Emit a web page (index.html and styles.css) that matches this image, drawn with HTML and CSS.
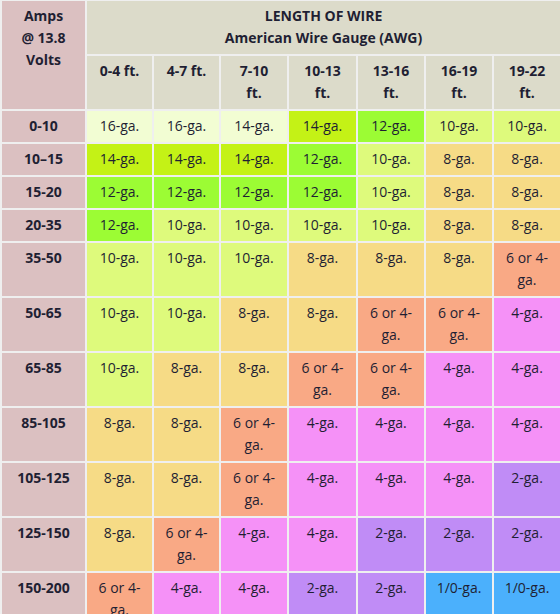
FILE: index.html
```html
<!DOCTYPE html>
<html>
<head>
<meta charset="utf-8">
<link rel="stylesheet" href="styles.css">
</head>
<body>
<table class="wire">
  <colgroup>
    <col class="c-amps"><col class="c67"><col class="c67"><col class="c68"><col class="c69"><col class="c68"><col class="c68"><col class="c68">
  </colgroup>
  <thead>
    <tr>
      <th class="amps" rowspan="2">Amps<br>@ 13.8<br>Volts</th>
      <th class="head" colspan="7">LENGTH OF WIRE<br>American Wire Gauge (AWG)</th>
    </tr>
    <tr>
      <th class="head">0-4 ft.</th>
      <th class="head">4-7 ft.</th>
      <th class="head">7-10 ft.</th>
      <th class="head">10-13 ft.</th>
      <th class="head">13-16 ft.</th>
      <th class="head">16-19 ft.</th>
      <th class="head">19-22 ft.</th>
    </tr>
  </thead>
  <tbody>
    <tr><th class="amps">0-10</th><td class="g16">16-ga.</td><td class="g16">16-ga.</td><td class="g16">14-ga.</td><td class="g14">14-ga.</td><td class="g12">12-ga.</td><td class="g10">10-ga.</td><td class="g10">10-ga.</td></tr>
    <tr><th class="amps">10–15</th><td class="g14">14-ga.</td><td class="g14">14-ga.</td><td class="g14">14-ga.</td><td class="g12">12-ga.</td><td class="g10">10-ga.</td><td class="g8">8-ga.</td><td class="g8">8-ga.</td></tr>
    <tr><th class="amps">15-20</th><td class="g12">12-ga.</td><td class="g12">12-ga.</td><td class="g12">12-ga.</td><td class="g12">12-ga.</td><td class="g10">10-ga.</td><td class="g8">8-ga.</td><td class="g8">8-ga.</td></tr>
    <tr><th class="amps">20-35</th><td class="g12">12-ga.</td><td class="g10">10-ga.</td><td class="g10">10-ga.</td><td class="g10">10-ga.</td><td class="g10">10-ga.</td><td class="g8">8-ga.</td><td class="g8">8-ga.</td></tr>
    <tr><th class="amps">35-50</th><td class="g10">10-ga.</td><td class="g10">10-ga.</td><td class="g10">10-ga.</td><td class="g8">8-ga.</td><td class="g8">8-ga.</td><td class="g8">8-ga.</td><td class="g6">6 or 4-ga.</td></tr>
    <tr><th class="amps">50-65</th><td class="g10">10-ga.</td><td class="g10">10-ga.</td><td class="g8">8-ga.</td><td class="g8">8-ga.</td><td class="g6">6 or 4-ga.</td><td class="g6">6 or 4-ga.</td><td class="g4">4-ga.</td></tr>
    <tr><th class="amps">65-85</th><td class="g10">10-ga.</td><td class="g8">8-ga.</td><td class="g8">8-ga.</td><td class="g6">6 or 4-ga.</td><td class="g6">6 or 4-ga.</td><td class="g4">4-ga.</td><td class="g4">4-ga.</td></tr>
    <tr><th class="amps">85-105</th><td class="g8">8-ga.</td><td class="g8">8-ga.</td><td class="g6">6 or 4-ga.</td><td class="g4">4-ga.</td><td class="g4">4-ga.</td><td class="g4">4-ga.</td><td class="g4">4-ga.</td></tr>
    <tr><th class="amps">105-125</th><td class="g8">8-ga.</td><td class="g8">8-ga.</td><td class="g6">6 or 4-ga.</td><td class="g4">4-ga.</td><td class="g4">4-ga.</td><td class="g4">4-ga.</td><td class="g2">2-ga.</td></tr>
    <tr><th class="amps">125-150</th><td class="g8">8-ga.</td><td class="g6">6 or 4-ga.</td><td class="g4">4-ga.</td><td class="g4">4-ga.</td><td class="g2">2-ga.</td><td class="g2">2-ga.</td><td class="g2">2-ga.</td></tr>
    <tr><th class="amps">150-200</th><td class="g6">6 or 4-ga.</td><td class="g4">4-ga.</td><td class="g4">4-ga.</td><td class="g2">2-ga.</td><td class="g2">2-ga.</td><td class="g0">1/0-ga.</td><td class="g0">1/0-ga.</td></tr>
  </tbody>
</table>
</body>
</html>
```
FILE: styles.css
```css
html, body {
  margin: 0;
  padding: 0;
  background: #ffffff;
}
.wire {
  border-collapse: collapse;
  table-layout: fixed;
  width: 560px;
  margin-top: -1px;
  font-family: "Open Sans", "Noto Sans", sans-serif;
  font-size: 14px;
  line-height: 22px;
  color: #1f1f33;
}
.c-amps { width: 85px; }
.c67 { width: 67px; }
.c68 { width: 68px; }
.c69 { width: 69px; }
.wire th, .wire td {
  border: 2px solid #efefef;
  padding: 4px 10px 5px;
  text-align: center;
  vertical-align: top;
}
.wire th { font-weight: 700; }
.wire th.head { padding-left: 11px; padding-right: 11px; }
.wire td { font-weight: 400; }
.amps { background: #dbc0c1; }
.head { background: #dcdbca; }
.g16 { background: #f2fdd3; }
.g14 { background: #c4f216; }
.g12 { background: #9cfc34; }
.g10 { background: #defa7c; }
.g8 { background: #f6db86; }
.g6 { background: #f9a985; }
.g4 { background: #f591f7; }
.g2 { background: #c08cf6; }
.g0 { background: #4bb0fc; }
```
